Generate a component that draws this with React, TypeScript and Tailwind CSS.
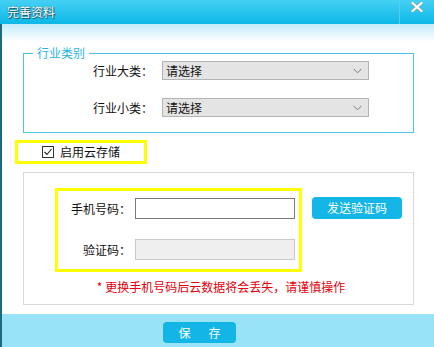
import React from "react";

function Chevron() {
  return (
    <svg width="9" height="6" viewBox="0 0 9 6" className="ml-auto mr-[6px]">
      <polyline points="0.5,0.8 4.5,4.8 8.5,0.8" fill="none" stroke="#7a7a7a" strokeWidth="1" />
    </svg>
  );
}

function Select() {
  return (
    <div className="flex items-center w-[207px] h-[19px] border border-[#b4b4b4] bg-[#e4e4e4] pl-[3px] text-[#111]">
      <span className="leading-[17px]">请选择</span>
      <Chevron />
    </div>
  );
}

export default function App() {
  return (
    <div className="w-[434px] h-[347px] flex flex-col overflow-hidden bg-white text-[12px] text-[#111] font-['Noto_Sans_CJK_SC','Noto_Sans',sans-serif]">
      {/* title bar */}
      <div className="h-[24px] flex bg-[linear-gradient(to_bottom,#45d0f4,#0cb8e6)]">
        <div className="pl-[7px] flex items-center text-white leading-[14px] [text-shadow:0_0_1px_#1a4a5a,1px_1px_1px_#1a4a5a]">
          完善资料
        </div>
        <div className="ml-auto w-[35px] border-l border-[#4fd0f0] flex justify-center pt-[2px]">
          <svg width="12" height="10" viewBox="0 0 12 10">
            <path d="M1.5 1 L10.5 9 M10.5 1 L1.5 9" stroke="#8aa4b0" strokeWidth="3.4" strokeLinecap="square" />
            <path d="M1.5 1 L10.5 9 M10.5 1 L1.5 9" stroke="#ffffff" strokeWidth="2" strokeLinecap="square" />
          </svg>
        </div>
      </div>

      <div className="flex-1 flex flex-col border-l-2 border-[#1c6a82]">
        {/* content */}
        <div className="flex-1 pl-[13px] bg-[linear-gradient(to_bottom,#c3ecfa_0px,#ffffff_18px)]">
          <fieldset className="mt-[21px] ml-[8px] w-[391px] border border-[#4cc3e2] pb-[15px]">
            <legend className="ml-[9px] px-[4px] leading-[16px] text-[#27b4df]">行业类别</legend>
            <div className="pl-[69px] flex items-center h-[19px]">
              <span className="w-[69px]">行业大类：</span>
              <Select />
            </div>
            <div className="pl-[69px] mt-[18px] flex items-center h-[19px]">
              <span className="w-[69px]">行业小类：</span>
              <Select />
            </div>
          </fieldset>

          <div className="mt-[7px] w-[132px] h-[24px] border-[3px] border-[#ffff00] flex items-center pl-[24px] gap-[6px]">
            <div className="w-[12px] h-[12px] border border-[#333] bg-white flex items-center justify-center">
              <svg width="10" height="10" viewBox="0 0 10 10">
                <polyline points="1.5,5 4,7.5 8.5,2" fill="none" stroke="#222" strokeWidth="1.1" />
              </svg>
            </div>
            <span className="leading-[14px]">启用云存储</span>
          </div>

          <div className="mt-[8px] ml-[8px] w-[391px] h-[133px] border border-[#d8d8d8] bg-white">
            <div className="flex items-start pt-[15px] pl-[31px]">
              <div className="w-[247px] h-[84px] border-[3px] border-[#ffff00] pt-[7px] pl-[13px]">
                <div className="flex items-center gap-[4px]">
                  <span className="w-[60px] text-right">手机号码：</span>
                  <div className="w-[160px] h-[21px] border border-[#7a7a7a] bg-white" />
                </div>
                <div className="flex items-center gap-[4px] mt-[20px]">
                  <span className="w-[60px] text-right">验证码：</span>
                  <div className="w-[160px] h-[21px] border border-[#cacaca] bg-[#efefef]" />
                </div>
              </div>
              <div className="ml-[10px] mt-[9px] w-[90px] h-[22px] rounded-[4px] bg-[#14b5e7] text-white flex items-center justify-center">
                发送验证码
              </div>
            </div>
            <div className="mt-[7px] pl-[5px] text-center text-[#e3000b] leading-[16px]">
              * 更换手机号码后云数据将会丢失，请谨慎操作
            </div>
          </div>
        </div>

        {/* footer */}
        <div className="h-[33px] bg-[#98e3f6] pl-[161px] pt-[8px]">
          <div className="w-[73px] h-[21px] rounded-[4px] bg-[#12b5e6] text-white flex items-center justify-center gap-[18px]">
            <span>保</span>
            <span>存</span>
          </div>
        </div>
      </div>
    </div>
  );
}
